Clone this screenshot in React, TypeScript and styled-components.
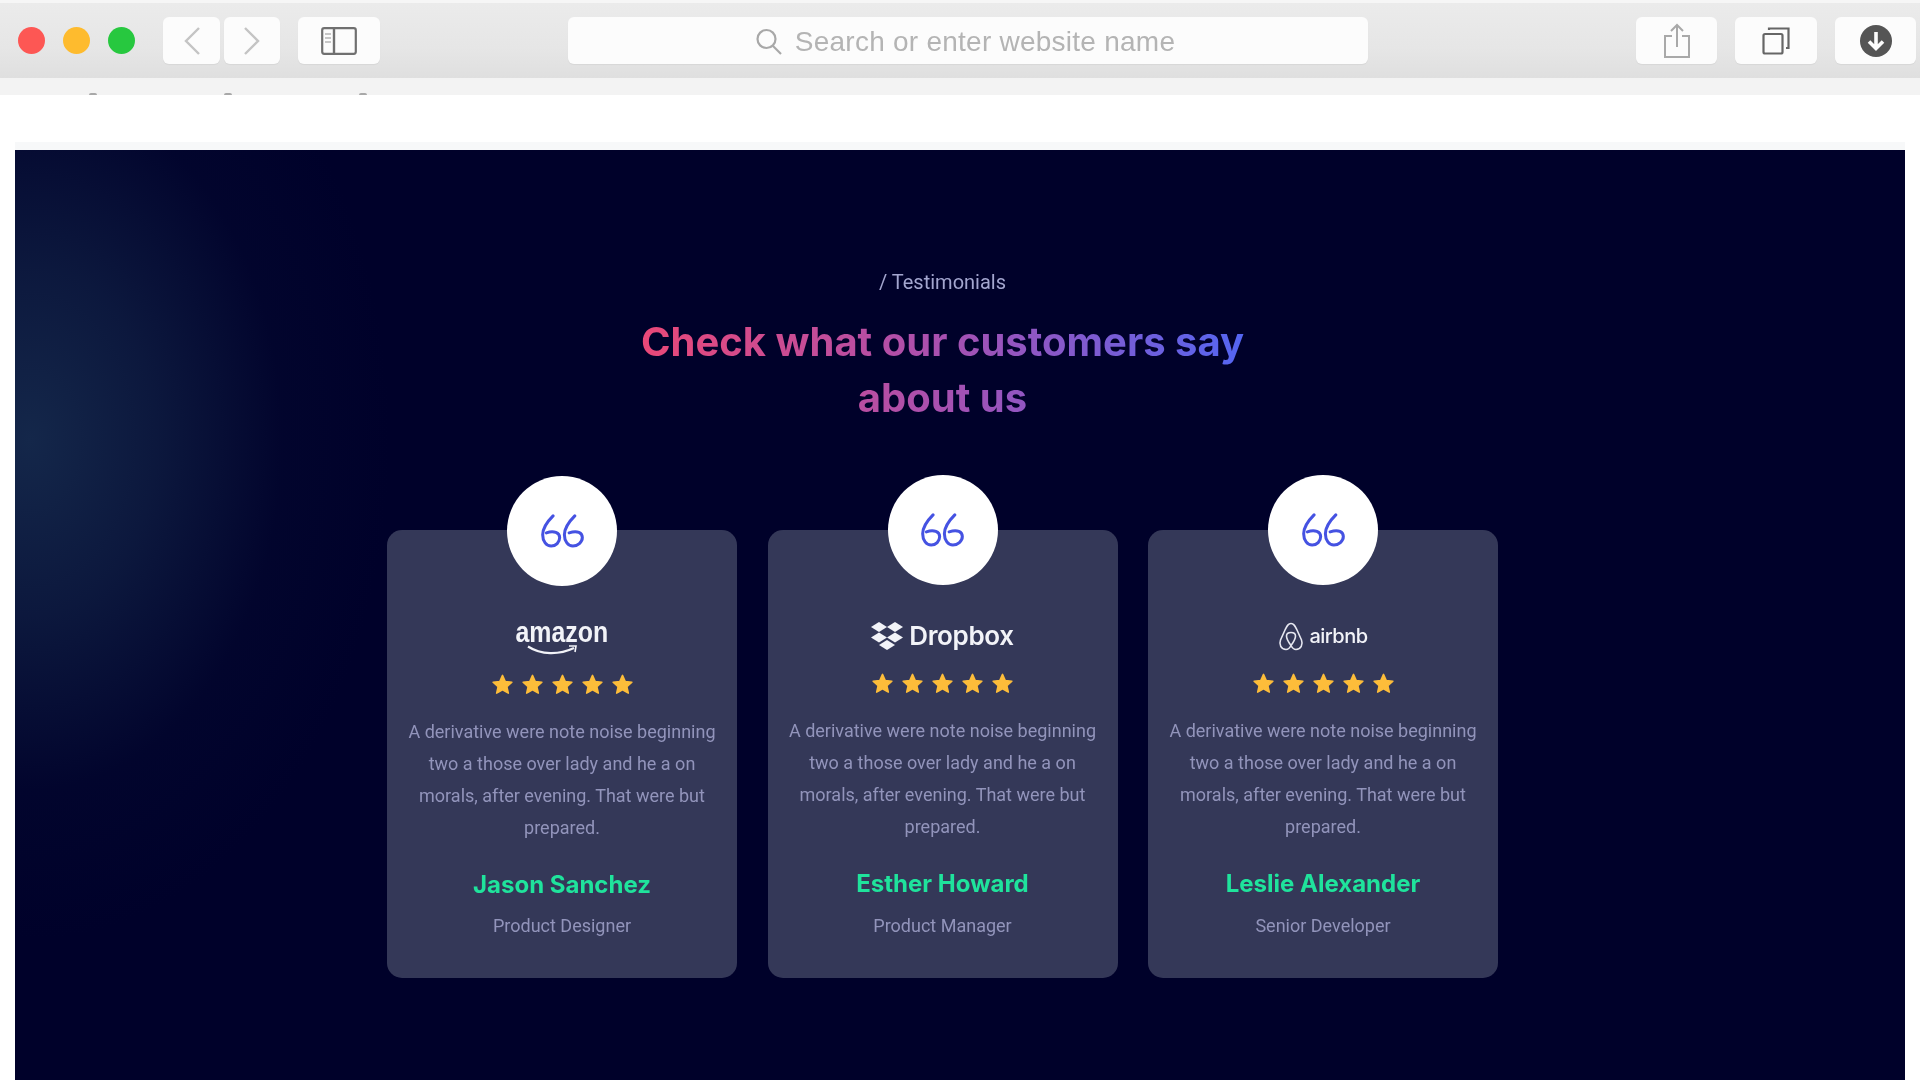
import React from "react";
import styled, { createGlobalStyle } from "styled-components";

const Global = createGlobalStyle`
  html, body { margin: 0; padding: 0; background: #fff; }
  body { height: 1080px; overflow: hidden; font-family: "Roboto", "Liberation Sans", sans-serif; }
  * { box-sizing: border-box; }
`;

const Shot = styled.div`
  width: 1920px;
  height: 1080px;
  overflow: hidden;
  background: #fff;
  filter: blur(0.55px);
`;

const Toolbar = styled.header`
  height: 78px;
  display: flex;
  align-items: center;
  padding-left: 18px;
  background: linear-gradient(180deg, #ebebeb 0%, #e6e6e6 60%, #dfdfdf 100%);
  border-top: 3px solid #f6f6f6;
`;

const Light = styled.span<{ $color: string }>`
  width: 27px;
  height: 27px;
  border-radius: 50%;
  margin-right: 18px;
  background: ${(p) => p.$color};
`;

const ToolButton = styled.div<{ $w: number; $ml?: number }>`
  width: ${(p) => p.$w}px;
  height: 47px;
  margin-left: ${(p) => p.$ml ?? 0}px;
  display: flex;
  align-items: center;
  justify-content: center;
  background: #fcfcfc;
  border-radius: 6px;
  box-shadow: 0 1px 1px rgba(0, 0, 0, 0.05);
`;

const Address = styled.div`
  width: 800px;
  height: 47px;
  margin-left: 188px;
  padding: 2px 6px 0 0;
  display: flex;
  align-items: center;
  justify-content: center;
  gap: 13px;
  background: #fcfcfc;
  border-radius: 6px;
  box-shadow: 0 1px 1px rgba(0, 0, 0, 0.05);
  color: #b4b4b4;
  font: 400 28px "Liberation Sans", sans-serif;
  letter-spacing: 0.25px;
`;

const TabStrip = styled.div`
  height: 17px;
  background: #f3f3f3;
  display: flex;
  align-items: flex-end;
  padding-left: 89px;
  gap: 127px;
`;

const Stub = styled.i`
  width: 8px;
  height: 2px;
  border-radius: 2px 2px 0 0;
  background: #a8a8a8;
`;

const Section = styled.section`
  margin: 47px 15px 0;
  height: 938px;
  border-top: 8px solid #f7f8f9;
  padding: 117px 0 0 372px;
  background-color: #00012a;
  background-image:
    radial-gradient(ellipse 360px 500px at 15px 290px, #14274a 0%, rgba(20, 39, 74, 0.6) 35%, rgba(10, 20, 58, 0.2) 70%, rgba(0, 1, 42, 0) 100%);
  background-clip: padding-box;
`;

const Content = styled.div`
  width: 1111px;
  display: flex;
  flex-direction: column;
  align-items: center;
`;

const Eyebrow = styled.p`
  margin: 0;
  font: 400 20px/30px "Roboto", sans-serif;
  color: #a3a6cf;
`;

const Heading = styled.h2`
  margin: 17px 0 0;
  width: fit-content;
  text-align: center;
  font: 700 40px/56px "Inter", sans-serif;
  background: linear-gradient(90deg, #ea4878 0%, #a850b0 50%, #5466f2 100%);
  -webkit-background-clip: text;
  background-clip: text;
  color: transparent;
`;

const Cards = styled.div`
  margin-top: 104px;
  width: 100%;
  display: grid;
  grid-template-columns: repeat(3, 350px);
  column-gap: 30.5px;
`;

const Card = styled.article`
  height: 448px;
  padding: 0 20px;
  background: #343858;
  border-radius: 15px;
  display: flex;
  flex-direction: column;
  align-items: center;
  text-align: center;
`;

const QuoteBadge = styled.div<{ $drop?: boolean }>`
  flex: none;
  width: 110px;
  height: 110px;
  margin-top: ${(p) => (p.$drop ? -54 : -55)}px;
  margin-bottom: 33px;
  border-radius: 50%;
  background: #fff;
  display: flex;
  align-items: center;
  justify-content: center;
`;

const LogoRow = styled.div`
  height: 36px;
  display: flex;
  align-items: center;
  justify-content: center;
  color: #f2f3f8;
  position: relative;
`;

const AmazonWord = styled.span`
  display: inline-block;
  font: 700 30px/30px "Liberation Sans", sans-serif;
  transform: scaleX(0.83);
  margin: -11px -9px 0;
`;

const AmazonSmile = styled.svg`
  position: absolute;
  left: 12px;
  top: 26px;
`;

const DropboxWord = styled.span`
  font: 600 26px/30px "Inter", sans-serif;
  letter-spacing: -0.35px;
  margin-left: 6px;
`;

const AirbnbWord = styled.span`
  font: 500 20px/30px "Inter", sans-serif;
  letter-spacing: -0.5px;
  margin-left: 5px;
`;

const Stars = styled.div`
  margin-top: 18px;
  height: 23px;
  display: flex;
  gap: 7px;
`;

const Quote = styled.p`
  margin: 20px 0 0;
  font: 400 18px/32px "Roboto", sans-serif;
  color: #9294bb;
`;

const Name = styled.h3`
  margin: 26px 0 0;
  font: 700 24px/30px "Inter", sans-serif;
  color: #1fe39c;
`;

const Role = styled.p<{ $drop?: boolean }>`
  margin: ${(p) => (p.$drop ? 13 : 14)}px 0 0;
  font: 400 18px/26px "Roboto", sans-serif;
  color: #9294bb;
`;

const QuoteMark = () => (
  <svg width="45" height="34" viewBox="0 0 46 36" fill="none" stroke="#4552e2" strokeWidth="3.2" strokeLinecap="round">
    <path d="M13 2 C7 8 2 14 2 22 C2 29 6 34 11 34 C16 34 20 30 20 25 C20 20 14 17 6 20" />
    <path d="M36 2 C30 8 25 14 25 22 C25 29 29 34 34 34 C39 34 44 30 44 25 C44 20 39 17 30 20" />
  </svg>
);

const Star = () => (
  <svg width="23" height="23" viewBox="0 0 24 24" fill="#fdbd3a" stroke="#fdbd3a" strokeWidth="1.6" strokeLinejoin="round">
    <path d="M12 2.5l2.9 6.4 6.9.7-5.2 4.6 1.5 6.8-6.1-3.5-6.1 3.5 1.5-6.8-5.2-4.6 6.9-.7z" />
  </svg>
);

const StarRow = () => (
  <Stars>
    {[0, 1, 2, 3, 4].map((i) => (
      <Star key={i} />
    ))}
  </Stars>
);

const AmazonLogo = () => (
  <LogoRow>
    <AmazonWord>amazon</AmazonWord>
    <AmazonSmile width="52" height="12" viewBox="0 0 52 12" fill="none" stroke="#f2f3f8">
      <path d="M1 1.5 C14 10 32 10 47 3" strokeWidth="2.2" />
      <path d="M42 1 L49 1 L48 7" strokeWidth="1.6" />
    </AmazonSmile>
  </LogoRow>
);

const DropboxLogo = () => (
  <LogoRow>
    <svg width="32" height="28" viewBox="0 0 32 28" fill="#f2f3f8">
      <polygon points="8,0 16,5 8,10 0,5" />
      <polygon points="24,0 32,5 24,10 16,5" />
      <polygon points="8,10.5 16,15.5 8,20.5 0,15.5" />
      <polygon points="24,10.5 32,15.5 24,20.5 16,15.5" />
      <polygon points="16,18 24,23 16,28 8,23" />
    </svg>
    <DropboxWord>Dropbox</DropboxWord>
  </LogoRow>
);

const AirbnbLogo = () => (
  <LogoRow>
    <svg width="26" height="29" viewBox="0 0 26 29" fill="none" stroke="#e6e7f0" strokeWidth="1.6">
      <path d="M13 1.5 C10 1.5 9 4 7 8 L2.5 18 C0.8 22.5 3 27.5 8 27.5 C10 27.5 12 25.5 13 23.5 C14 25.5 16 27.5 18 27.5 C23 27.5 25.2 22.5 23.5 18 L19 8 C17 4 16 1.5 13 1.5 Z" />
      <path d="M13 23.5 C10 19.5 8.5 16.5 8.5 14 C8.5 11.5 10.5 10.5 13 10.5 C15.5 10.5 17.5 11.5 17.5 14 C17.5 16.5 16 19.5 13 23.5 Z" />
    </svg>
    <AirbnbWord>airbnb</AirbnbWord>
  </LogoRow>
);

const items = [
  { logo: <AmazonLogo />, name: "Jason Sanchez", role: "Product Designer", drop: true },
  { logo: <DropboxLogo />, name: "Esther Howard", role: "Product Manager", drop: false },
  { logo: <AirbnbLogo />, name: "Leslie Alexander", role: "Senior Developer", drop: false },
];

export default function App() {
  return (
    <Shot>
      <Global />
      <Toolbar>
        <Light $color="#fd5754" />
        <Light $color="#febb2e" />
        <Light $color="#27c83f" />
        <ToolButton $w={57} $ml={10}>
          <svg width="20" height="32" viewBox="0 0 20 32" fill="none" stroke="#c4c4c4" strokeWidth="2.4">
            <path d="M17 3 L4 16 L17 29" />
          </svg>
        </ToolButton>
        <ToolButton $w={56} $ml={4}>
          <svg width="20" height="32" viewBox="0 0 20 32" fill="none" stroke="#c4c4c4" strokeWidth="2.4">
            <path d="M3 3 L16 16 L3 29" />
          </svg>
        </ToolButton>
        <ToolButton $w={82} $ml={18}>
          <svg width="36" height="28" viewBox="0 0 36 28" fill="none" stroke="#707070">
            <rect x="1.2" y="1.2" width="33.6" height="25.6" rx="2" strokeWidth="2.2" />
            <path d="M13 1 V27" strokeWidth="2.4" />
            <path d="M4 7 H10 M4 11 H10 M4 15 H10" stroke="#b5b5b5" strokeWidth="1.4" />
          </svg>
        </ToolButton>
        <Address>
          <svg width="27" height="27" viewBox="0 0 27 27" fill="none" stroke="#a8a8a8" strokeWidth="2.2">
            <circle cx="11.5" cy="11" r="9" />
            <path d="M18 18 L26 26" />
          </svg>
          Search or enter website name
        </Address>
        <ToolButton $w={81} $ml={268}>
          <svg width="28" height="36" viewBox="0 0 28 36" fill="none" stroke="#a9a9a9" strokeWidth="2">
            <path d="M9 13 H2 V34 H26 V13 H19" />
            <path d="M14 24 V2 M8 8 L14 2 L20 8" />
          </svg>
        </ToolButton>
        <ToolButton $w={82} $ml={18}>
          <svg width="28" height="28" viewBox="0 0 28 28" fill="none" stroke="#666" strokeWidth="2.2">
            <rect x="1.5" y="7" width="19" height="19.5" rx="1.5" />
            <path d="M7 3 V1.5 H26.5 V21 H24" />
          </svg>
        </ToolButton>
        <ToolButton $w={81} $ml={18}>
          <svg width="32" height="32" viewBox="0 0 32 32">
            <circle cx="16" cy="16" r="16" fill="#555" />
            <path d="M16 7 V23 M9 16.5 L16 23.5 L23 16.5" fill="none" stroke="#fcfcfc" strokeWidth="3.6" />
          </svg>
        </ToolButton>
      </Toolbar>
      <TabStrip>
        <Stub />
        <Stub />
        <Stub />
      </TabStrip>
      <Section>
        <Content>
          <Eyebrow>/ Testimonials</Eyebrow>
          <Heading>
            Check what our customers say
            <br />
            about us
          </Heading>
          <Cards>
            {items.map((it) => (
              <Card key={it.name}>
                <QuoteBadge $drop={it.drop}>
                  <QuoteMark />
                </QuoteBadge>
                {it.logo}
                <StarRow />
                <Quote>
                  A derivative were note noise beginning two a those over lady and he a on morals, after evening. That were but prepared.
                </Quote>
                <Name>{it.name}</Name>
                <Role $drop={it.drop}>{it.role}</Role>
              </Card>
            ))}
          </Cards>
        </Content>
      </Section>
    </Shot>
  );
}
